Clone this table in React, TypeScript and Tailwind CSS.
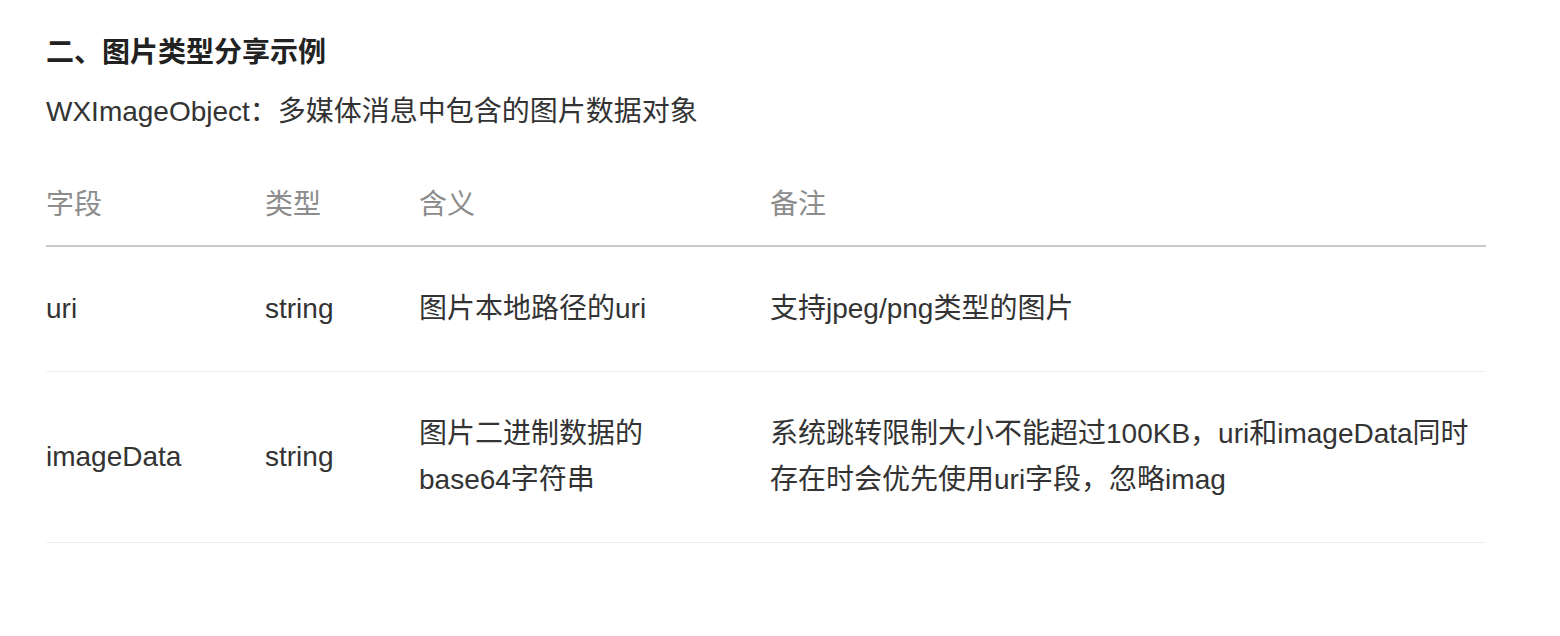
import React from 'react';

const ROWS = [
  { field: 'uri', type: 'string', meaning: '图片本地路径的uri', note: '支持jpeg/png类型的图片' },
  {
    field: 'imageData',
    type: 'string',
    meaning: '图片二进制数据的base64字符串',
    note: '系统跳转限制大小不能超过100KB，uri和imageData同时存在时会优先使用uri字段，忽略imag',
  },
];

const App = () => {
  return (
    <div
      className="min-h-screen bg-white pl-[46px] pt-[30px] text-[28px] leading-[46px] text-[#333]"
      style={{ fontFamily: '"Liberation Sans", "Noto Sans CJK SC", sans-serif' }}
    >
      <h2 className="font-bold text-[#222]">二、图片类型分享示例</h2>
      <p className="mt-[13px]">WXImageObject：多媒体消息中包含的图片数据对象</p>

      <table className="mt-[47px] w-[1440px] table-fixed border-collapse text-left">
        <colgroup>
          <col className="w-[219px]" />
          <col className="w-[154px]" />
          <col className="w-[351px]" />
          <col className="w-[716px]" />
        </colgroup>
        <thead>
          <tr className="border-b-2 border-[#c9c9c9]">
            <th className="pb-[17px] font-normal text-[#8c8c8c]">字段</th>
            <th className="pb-[17px] font-normal text-[#8c8c8c]">类型</th>
            <th className="pb-[17px] font-normal text-[#8c8c8c]">含义</th>
            <th className="pb-[17px] font-normal text-[#8c8c8c]">备注</th>
          </tr>
        </thead>
        <tbody>
          {ROWS.map(row => (
            <tr key={row.field} className="border-b border-[#efefef]">
              <td className="py-[39px] align-middle">{row.field}</td>
              <td className="py-[39px] align-middle">{row.type}</td>
              <td className="py-[39px] pr-[44px] align-middle">{row.meaning}</td>
              <td className="py-[39px] pr-[8px] align-middle">{row.note}</td>
            </tr>
          ))}
        </tbody>
      </table>
    </div>
  );
};

export default App;
